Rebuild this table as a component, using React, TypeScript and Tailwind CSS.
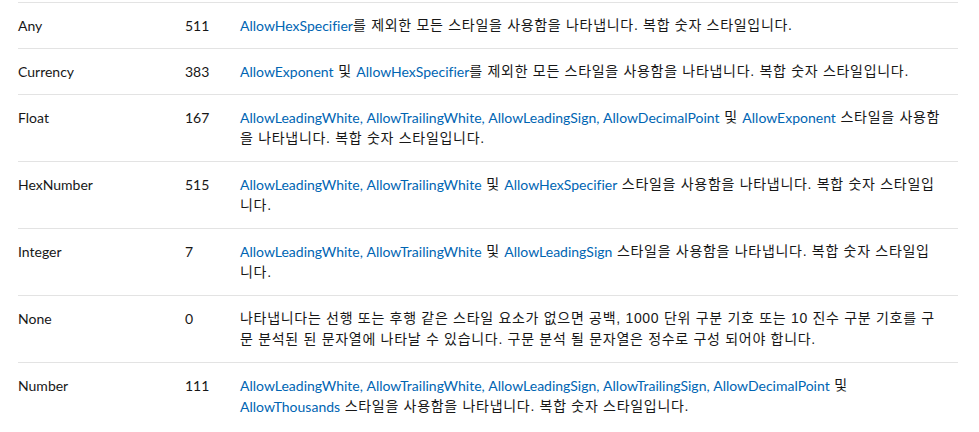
import React from "react";

type Part = string | { link: string };

const rows: { name: string; value: string; desc: Part[] }[] = [
  {
    name: "Any",
    value: "511",
    desc: [{ link: "AllowHexSpecifier" }, "를 제외한 모든 스타일을 사용함을 나타냅니다. 복합 숫자 스타일입니다."],
  },
  {
    name: "Currency",
    value: "383",
    desc: [
      { link: "AllowExponent" },
      " 및 ",
      { link: "AllowHexSpecifier" },
      "를 제외한 모든 스타일을 사용함을 나타냅니다. 복합 숫자 스타일입니다.",
    ],
  },
  {
    name: "Float",
    value: "167",
    desc: [
      { link: "AllowLeadingWhite, " },
      { link: "AllowTrailingWhite, " },
      { link: "AllowLeadingSign, " },
      { link: "AllowDecimalPoint" },
      " 및 ",
      { link: "AllowExponent" },
      " 스타일을 사용함을 나타냅니다. 복합 숫자 스타일입니다.",
    ],
  },
  {
    name: "HexNumber",
    value: "515",
    desc: [
      { link: "AllowLeadingWhite, " },
      { link: "AllowTrailingWhite" },
      " 및 ",
      { link: "AllowHexSpecifier" },
      " 스타일을 사용함을 나타냅니다. 복합 숫자 스타일입니다.",
    ],
  },
  {
    name: "Integer",
    value: "7",
    desc: [
      { link: "AllowLeadingWhite, " },
      { link: "AllowTrailingWhite" },
      " 및 ",
      { link: "AllowLeadingSign" },
      " 스타일을 사용함을 나타냅니다. 복합 숫자 스타일입니다.",
    ],
  },
  {
    name: "None",
    value: "0",
    desc: [
      "나타냅니다는 선행 또는 후행 같은 스타일 요소가 없으면 공백, 1000 단위 구분 기호 또는 10 진수 구분 기호를 구문 분석된 된 문자열에 나타날 수 있습니다. 구문 분석 될 문자열은 정수로 구성 되어야 합니다.",
    ],
  },
  {
    name: "Number",
    value: "111",
    desc: [
      { link: "AllowLeadingWhite, " },
      { link: "AllowTrailingWhite, " },
      { link: "AllowLeadingSign, " },
      { link: "AllowTrailingSign, " },
      { link: "AllowDecimalPoint" },
      " 및 ",
      { link: "AllowThousands" },
      " 스타일을 사용함을 나타냅니다. 복합 숫자 스타일입니다.",
    ],
  },
];

export default function App() {
  return (
    <div className="min-h-screen bg-white pt-[2px] text-[14px] leading-[21px] text-[#171717] [font-variant-ligatures:none] [font-family:Lato,'Noto_Sans_CJK_KR',sans-serif]">
      <div className="ml-[18px] w-[940px]">
        {rows.map((row) => (
          <div
            key={row.name}
            className="grid grid-cols-[167px_55px_1fr] border-t border-[#e3e3e3] py-3"
          >
            <div>{row.name}</div>
            <div>{row.value}</div>
            <div className="pr-4">
              {row.desc.map((p, i) =>
                typeof p === "string" ? (
                  <span
                    key={i}
                    className="align-top leading-[21px] tracking-[0.7px] [font-family:'Liberation_Sans','Noto_Sans_CJK_KR',sans-serif]"
                  >
                    {p}
                  </span>
                ) : (
                  <a key={i} href="#" className="align-top leading-[21px] text-[#0065b3]">
                    {p.link}
                  </a>
                )
              )}
            </div>
          </div>
        ))}
      </div>
    </div>
  );
}
